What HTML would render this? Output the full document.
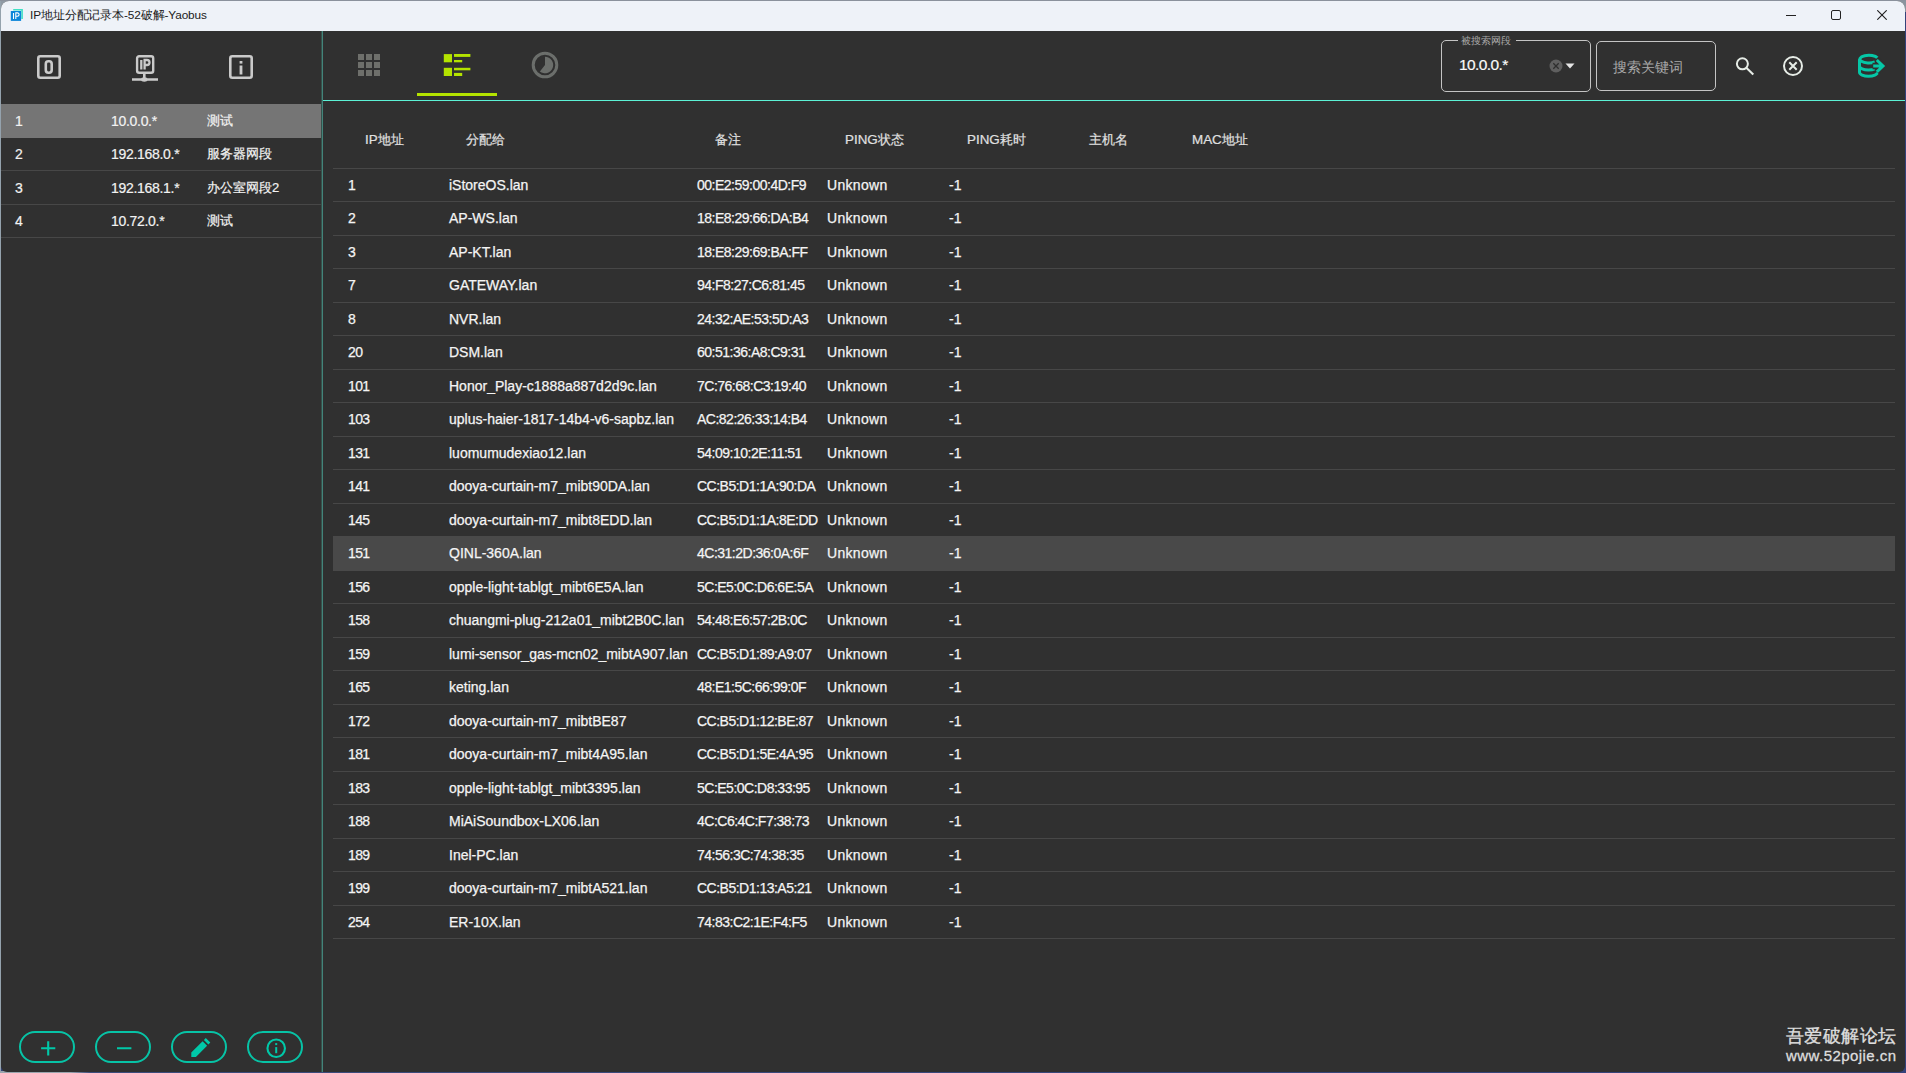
<!DOCTYPE html>
<html><head><meta charset="utf-8">
<style>
*{margin:0;padding:0;box-sizing:border-box}
html,body{width:1906px;height:1073px;overflow:hidden;background:#34427a;font-family:"Liberation Sans",sans-serif}
#win{position:absolute;left:1px;top:1px;width:1904px;height:1071px;border-radius:8px 8px 6px 6px;overflow:hidden;background:#303030}
.abs{position:absolute}
#title{position:absolute;left:0;top:0;width:1904px;height:30px;background:#eef2f8}
#title .t{position:absolute;left:29px;top:7px;font-size:11.8px;letter-spacing:-0.12px;color:#1a1a1a;white-space:nowrap}
#vline{position:absolute;left:320px;top:30px;width:1px;height:1041px;background:#36514b;box-shadow:1px 0 0 #43847a}
#hline{position:absolute;left:322px;top:99px;width:1582px;height:1px;background:#5cf2d6}
.srow{position:absolute;left:0;width:320px;height:34px;color:#f2f2f2;font-size:14px}
.srow span{position:absolute;top:9px;white-space:nowrap;-webkit-text-stroke:0.2px #f2f2f2}
.srow span.cj{font-size:13px;top:8px}
.sline{position:absolute;left:0;width:320px;height:1px;background:#474747}
.th{position:absolute;top:129.5px;font-size:13.4px;color:#e0e0e0;white-space:nowrap;-webkit-text-stroke:0.2px #e0e0e0}
.tline{position:absolute;left:332px;width:1562px;height:1px;background:#474747}
.hl{position:absolute;left:332px;width:1562px;background:#494949}
.td{position:absolute;font-size:14px;color:#f4f4f4;white-space:nowrap;-webkit-text-stroke:0.25px #f4f4f4}
.c1{left:347px;letter-spacing:-0.6px}.c2{left:448px;letter-spacing:0px}.c3{left:696px;letter-spacing:-0.5px}.c4{left:826px;letter-spacing:0.3px}.c5{left:948px}
.btn{position:absolute;top:1030px;width:56px;height:32px;border:2px solid #07c3a6;border-radius:16px}
.btn svg{position:absolute;left:0.6px;top:0.6px}

#dl{position:absolute;left:0;top:0;width:1px;height:1073px;background:#94a2ad}
#dt{position:absolute;left:0;top:0;width:1906px;height:1px;background:#8a919c}
#db{position:absolute;left:0;top:1071px;width:1906px;height:2px;background:linear-gradient(90deg,#9aa5ae 0,#9aa5ae 70px,#3c4c7c 90px,#34427a 100%)}
.srow span.ip{letter-spacing:-0.3px}
#dc{position:absolute;left:0;top:0;width:12px;height:12px;background:#8f9aa5}
#dc2{position:absolute;right:0;top:0;width:12px;height:12px;background:#8a949e}

</style></head><body>
<div id="dc"></div><div id="dc2"></div><div id="dl"></div><div id="dt"></div><div id="db"></div>
<div id="win">
<div id="title">
  <svg class="abs" style="left:9px;top:8px" width="14" height="14" viewBox="0 0 14 14">
    <path d="M3.2 0.8H12.1V10" fill="none" stroke="#3fe0c4" stroke-width="1.6"/>
    <rect x="0.8" y="2" width="10.3" height="9.9" fill="#0a86d9"/>
    <path d="M3.5 3.9v6.1M5.8 10V3.9h1.6a1.7 1.7 0 0 1 0 3.4H5.8" fill="none" stroke="#fff" stroke-width="1.1"/>
  </svg>
  <div class="t">IP地址分配记录本-52破解-Yaobus</div>
  <div class="abs" style="left:1785px;top:14px;width:10px;height:1px;background:#222"></div>
  <div class="abs" style="left:1830px;top:9px;width:10px;height:10px;border:1px solid #222;border-radius:2px"></div>
  <svg class="abs" style="left:1876px;top:9px" width="10" height="10" viewBox="0 0 10 10"><path d="M0.3 0.3L9.7 9.7M9.7 0.3L0.3 9.7" stroke="#1e1e1e" stroke-width="1.1"/></svg>
</div>

<!-- sidebar icons -->
<svg class="abs" style="left:35px;top:53px" width="28" height="28" viewBox="0 0 28 28">
  <rect x="2.3" y="2.3" width="21.4" height="21.4" rx="2" fill="none" stroke="#cacaca" stroke-width="2.6"/>
  <rect x="9.8" y="7.3" width="5.9" height="11.4" rx="2.6" fill="none" stroke="#cacaca" stroke-width="2.6"/>
</svg>
<svg class="abs" style="left:130px;top:53px" width="30" height="30" viewBox="0 0 30 30">
  <rect x="6.1" y="2.2" width="16.1" height="16.6" rx="2" fill="none" stroke="#cacaca" stroke-width="2.4"/>
  <path d="M10.3 6v9.5M13.6 15.5V6h2.4a2.5 2.5 0 0 1 0 5h-2.4" fill="none" stroke="#cacaca" stroke-width="2.3"/>
  <path d="M13.3 19v6M1 25.5h26" stroke="#cacaca" stroke-width="2.6"/>
  <ellipse cx="13.3" cy="25.5" rx="3.2" ry="2.2" fill="#cacaca"/>
</svg>
<svg class="abs" style="left:227px;top:53px" width="28" height="28" viewBox="0 0 28 28">
  <rect x="2.3" y="2.3" width="21.4" height="21.4" rx="2" fill="none" stroke="#cacaca" stroke-width="2.6"/>
  <path d="M13 11.5v9" stroke="#cacaca" stroke-width="2.8"/>
  <rect x="11.6" y="7" width="2.8" height="2.6" fill="#cacaca"/>
</svg>

<!-- sidebar rows -->
<div class="srow" style="top:103px;height:34px;background:#757575"><span style="left:14px">1</span><span class="ip" style="left:110px">10.0.0.*</span><span class="cj" style="left:206px">测试</span></div>
<div class="srow" style="top:136px"><span style="left:14px">2</span><span class="ip" style="left:110px">192.168.0.*</span><span class="cj" style="left:206px">服务器网段</span></div>
<div class="sline" style="top:169px"></div>
<div class="srow" style="top:170px"><span style="left:14px">3</span><span class="ip" style="left:110px">192.168.1.*</span><span class="cj" style="left:206px">办公室网段2</span></div>
<div class="sline" style="top:203px"></div>
<div class="srow" style="top:203px"><span style="left:14px">4</span><span class="ip" style="left:110px">10.72.0.*</span><span class="cj" style="left:206px">测试</span></div>
<div class="sline" style="top:236px"></div>

<div id="vline"></div>
<div id="hline"></div>

<!-- toolbar icons -->
<svg class="abs" style="left:357px;top:53px" width="22" height="22" viewBox="0 0 22 22" fill="#6e6f6b">
  <rect x="0" y="0" width="6" height="6"/><rect x="8" y="0" width="6" height="6"/><rect x="16" y="0" width="6" height="6"/>
  <rect x="0" y="8" width="6" height="6"/><rect x="8" y="8" width="6" height="6"/><rect x="16" y="8" width="6" height="6"/>
  <rect x="0" y="16" width="6" height="6"/><rect x="8" y="16" width="6" height="6"/><rect x="16" y="16" width="6" height="6"/>
</svg>
<svg class="abs" style="left:442px;top:53px" width="28" height="23" viewBox="0 0 28 23" fill="#b4e300">
  <rect x="0.8" y="0.1" width="8.2" height="8.2"/><rect x="11" y="0" width="16.4" height="2.9"/><rect x="11" y="6" width="8.2" height="2.3"/>
  <rect x="0.8" y="13.8" width="8.2" height="8.2"/><rect x="11" y="13.8" width="16.4" height="2.5"/><rect x="11" y="18.9" width="8.2" height="3.1"/>
</svg>
<div class="abs" style="left:416px;top:91.5px;width:80px;height:3px;background:#b4e300"></div>
<svg class="abs" style="left:529px;top:49px" width="30" height="30" viewBox="0 0 30 30">
  <circle cx="15" cy="15" r="11.8" fill="none" stroke="#6b6e6b" stroke-width="3"/>
  <path d="M15 6.8A8.2 8.2 0 1 1 9.86 21.39L15 15Z" fill="#6b6e6b"/>
</svg>

<!-- search combo -->
<div class="abs" style="left:1440px;top:39px;width:150px;height:52px;border:1.5px solid #c4c4c4;border-radius:5px"></div>
<div class="abs" style="left:1457px;top:34px;width:58px;height:8px;background:#303030"></div>
<div class="abs" style="left:1460px;top:32.5px;font-size:10.2px;color:#a8a8a8;white-space:nowrap">被搜索网段</div>
<div class="abs" style="left:1458px;top:55px;font-size:15.5px;letter-spacing:-0.6px;color:#fafafa;white-space:nowrap;-webkit-text-stroke:0.2px #fafafa">10.0.0.*</div>
<svg class="abs" style="left:1548px;top:58px" width="14" height="14" viewBox="0 0 14 14">
  <circle cx="7" cy="7" r="6.5" fill="#5f5f5f"/>
  <path d="M4.3 4.3L9.7 9.7M9.7 4.3L4.3 9.7" stroke="#2e2e2e" stroke-width="1.3"/>
</svg>
<svg class="abs" style="left:1564px;top:62px" width="10" height="6" viewBox="0 0 10 6"><path d="M0.5 0.5H9.5L5 5.5Z" fill="#e6e6e6"/></svg>

<div class="abs" style="left:1595px;top:40px;width:120px;height:50px;border:1.5px solid #c4c4c4;border-radius:5px"></div>
<div class="abs" style="left:1612px;top:58px;font-size:14px;color:#a8a8a8;white-space:nowrap">搜索关键词</div>

<svg class="abs" style="left:1733px;top:55px" width="22" height="22" viewBox="0 0 22 22">
  <circle cx="8.4" cy="7.8" r="5.5" fill="none" stroke="#e6ece6" stroke-width="2"/>
  <path d="M12.3 11.7L19.3 18.5" stroke="#e6ece6" stroke-width="2.1"/>
</svg>
<svg class="abs" style="left:1780px;top:53px" width="24" height="24" viewBox="0 0 24 24">
  <circle cx="12" cy="12" r="9" fill="none" stroke="#e6ece6" stroke-width="2"/>
  <path d="M8.3 8.3L15.7 15.7M15.7 8.3L8.3 15.7" stroke="#e6ece6" stroke-width="2"/>
</svg>
<svg class="abs" style="left:1849px;top:47px" width="40" height="36" viewBox="0 0 40 36">
  <g fill="none" stroke="#05c7a6" stroke-width="3">
  <path d="M27.3 9.8A9 3.85 0 1 0 24.8 14"/>
  <path d="M9.5 11.25V24.3M9.5 18a9 4 0 0 0 18 0M9.5 24.3a9 4 0 0 0 18 0"/>
  </g>
  <path d="M22.5 18H33M26.8 12l6.2 6-6.2 5.8" fill="none" stroke="#303030" stroke-width="6.5"/>
  <path d="M23.2 18H33M26.8 12l6.2 6-6.2 5.8" fill="none" stroke="#05c7a6" stroke-width="3"/>
</svg>

<!-- table header -->
<div class="th" style="left:364px">IP地址</div>
<div class="th" style="left:465px">分配给</div>
<div class="th" style="left:714px">备注</div>
<div class="th" style="left:844px">PING状态</div>
<div class="th" style="left:966px">PING耗时</div>
<div class="th" style="left:1088px">主机名</div>
<div class="th" style="left:1191px">MAC地址</div>

<!-- bottom buttons -->
<div class="btn" style="left:18px"><svg width="53" height="29" viewBox="0 0 53 29"><path d="M26.2 7.2v14.2M19.1 14.3h14.2" stroke="#00c8a8" stroke-width="2.1"/></svg></div>
<div class="btn" style="left:94px"><svg width="53" height="29" viewBox="0 0 53 29"><path d="M19 14.3h14.4" stroke="#00c8a8" stroke-width="2.1"/></svg></div>
<div class="btn" style="left:170px"><svg width="53" height="29" viewBox="0 0 53 29"><path d="M17.3 23V18.5L28.6 7.2L33.1 11.7L21.9 23Z M29.9 6L31.8 4.1L36.3 8.6L34.4 10.5Z" fill="#00c8a8"/></svg></div>
<div class="btn" style="left:246px"><svg width="53" height="29" viewBox="0 0 53 29"><circle cx="26.2" cy="14.3" r="8.75" fill="none" stroke="#00c8a8" stroke-width="2.1"/><path d="M26.2 13.1v6.1" stroke="#00c8a8" stroke-width="2"/><rect x="25.2" y="9.1" width="2" height="2" fill="#00c8a8"/></svg></div>

<!-- watermark -->
<div class="abs" style="left:1785px;top:1022px;font-size:18.4px;letter-spacing:0.4px;color:#dedede;white-space:nowrap;-webkit-text-stroke:0.35px #dedede">吾爱破解论坛</div>
<div class="abs" style="left:1785px;top:1046px;font-size:15px;letter-spacing:0.45px;color:#dedede;white-space:nowrap;-webkit-text-stroke:0.3px #dedede">www.52pojie.cn</div>

<div class="tline" style="top:167px"></div><div class="tline" style="top:200px"></div><div class="tline" style="top:234px"></div><div class="tline" style="top:267px"></div><div class="tline" style="top:301px"></div><div class="tline" style="top:334px"></div><div class="tline" style="top:368px"></div><div class="tline" style="top:401px"></div><div class="tline" style="top:435px"></div><div class="tline" style="top:468px"></div><div class="tline" style="top:502px"></div><div class="tline" style="top:602px"></div><div class="tline" style="top:636px"></div><div class="tline" style="top:669px"></div><div class="tline" style="top:703px"></div><div class="tline" style="top:736px"></div><div class="tline" style="top:770px"></div><div class="tline" style="top:803px"></div><div class="tline" style="top:837px"></div><div class="tline" style="top:870px"></div><div class="tline" style="top:904px"></div><div class="tline" style="top:937px"></div>
<div class="td c1" style="top:176px">1</div><div class="td c2" style="top:176px">iStoreOS.lan</div><div class="td c3" style="top:176px">00:E2:59:00:4D:F9</div><div class="td c4" style="top:176px">Unknown</div><div class="td c5" style="top:176px">-1</div><div class="td c1" style="top:209px">2</div><div class="td c2" style="top:209px">AP-WS.lan</div><div class="td c3" style="top:209px">18:E8:29:66:DA:B4</div><div class="td c4" style="top:209px">Unknown</div><div class="td c5" style="top:209px">-1</div><div class="td c1" style="top:243px">3</div><div class="td c2" style="top:243px">AP-KT.lan</div><div class="td c3" style="top:243px">18:E8:29:69:BA:FF</div><div class="td c4" style="top:243px">Unknown</div><div class="td c5" style="top:243px">-1</div><div class="td c1" style="top:276px">7</div><div class="td c2" style="top:276px">GATEWAY.lan</div><div class="td c3" style="top:276px">94:F8:27:C6:81:45</div><div class="td c4" style="top:276px">Unknown</div><div class="td c5" style="top:276px">-1</div><div class="td c1" style="top:310px">8</div><div class="td c2" style="top:310px">NVR.lan</div><div class="td c3" style="top:310px">24:32:AE:53:5D:A3</div><div class="td c4" style="top:310px">Unknown</div><div class="td c5" style="top:310px">-1</div><div class="td c1" style="top:343px">20</div><div class="td c2" style="top:343px">DSM.lan</div><div class="td c3" style="top:343px">60:51:36:A8:C9:31</div><div class="td c4" style="top:343px">Unknown</div><div class="td c5" style="top:343px">-1</div><div class="td c1" style="top:377px">101</div><div class="td c2" style="top:377px">Honor_Play-c1888a887d2d9c.lan</div><div class="td c3" style="top:377px">7C:76:68:C3:19:40</div><div class="td c4" style="top:377px">Unknown</div><div class="td c5" style="top:377px">-1</div><div class="td c1" style="top:410px">103</div><div class="td c2" style="top:410px">uplus-haier-1817-14b4-v6-sapbz.lan</div><div class="td c3" style="top:410px">AC:82:26:33:14:B4</div><div class="td c4" style="top:410px">Unknown</div><div class="td c5" style="top:410px">-1</div><div class="td c1" style="top:444px">131</div><div class="td c2" style="top:444px">luomumudexiao12.lan</div><div class="td c3" style="top:444px">54:09:10:2E:11:51</div><div class="td c4" style="top:444px">Unknown</div><div class="td c5" style="top:444px">-1</div><div class="td c1" style="top:477px">141</div><div class="td c2" style="top:477px">dooya-curtain-m7_mibt90DA.lan</div><div class="td c3" style="top:477px">CC:B5:D1:1A:90:DA</div><div class="td c4" style="top:477px">Unknown</div><div class="td c5" style="top:477px">-1</div><div class="td c1" style="top:511px">145</div><div class="td c2" style="top:511px">dooya-curtain-m7_mibt8EDD.lan</div><div class="td c3" style="top:511px">CC:B5:D1:1A:8E:DD</div><div class="td c4" style="top:511px">Unknown</div><div class="td c5" style="top:511px">-1</div><div class="hl" style="top:535px;height:35px"></div><div class="td c1" style="top:544px">151</div><div class="td c2" style="top:544px">QINL-360A.lan</div><div class="td c3" style="top:544px">4C:31:2D:36:0A:6F</div><div class="td c4" style="top:544px">Unknown</div><div class="td c5" style="top:544px">-1</div><div class="td c1" style="top:578px">156</div><div class="td c2" style="top:578px">opple-light-tablgt_mibt6E5A.lan</div><div class="td c3" style="top:578px">5C:E5:0C:D6:6E:5A</div><div class="td c4" style="top:578px">Unknown</div><div class="td c5" style="top:578px">-1</div><div class="td c1" style="top:611px">158</div><div class="td c2" style="top:611px">chuangmi-plug-212a01_mibt2B0C.lan</div><div class="td c3" style="top:611px">54:48:E6:57:2B:0C</div><div class="td c4" style="top:611px">Unknown</div><div class="td c5" style="top:611px">-1</div><div class="td c1" style="top:645px">159</div><div class="td c2" style="top:645px">lumi-sensor_gas-mcn02_mibtA907.lan</div><div class="td c3" style="top:645px">CC:B5:D1:89:A9:07</div><div class="td c4" style="top:645px">Unknown</div><div class="td c5" style="top:645px">-1</div><div class="td c1" style="top:678px">165</div><div class="td c2" style="top:678px">keting.lan</div><div class="td c3" style="top:678px">48:E1:5C:66:99:0F</div><div class="td c4" style="top:678px">Unknown</div><div class="td c5" style="top:678px">-1</div><div class="td c1" style="top:712px">172</div><div class="td c2" style="top:712px">dooya-curtain-m7_mibtBE87</div><div class="td c3" style="top:712px">CC:B5:D1:12:BE:87</div><div class="td c4" style="top:712px">Unknown</div><div class="td c5" style="top:712px">-1</div><div class="td c1" style="top:745px">181</div><div class="td c2" style="top:745px">dooya-curtain-m7_mibt4A95.lan</div><div class="td c3" style="top:745px">CC:B5:D1:5E:4A:95</div><div class="td c4" style="top:745px">Unknown</div><div class="td c5" style="top:745px">-1</div><div class="td c1" style="top:779px">183</div><div class="td c2" style="top:779px">opple-light-tablgt_mibt3395.lan</div><div class="td c3" style="top:779px">5C:E5:0C:D8:33:95</div><div class="td c4" style="top:779px">Unknown</div><div class="td c5" style="top:779px">-1</div><div class="td c1" style="top:812px">188</div><div class="td c2" style="top:812px">MiAiSoundbox-LX06.lan</div><div class="td c3" style="top:812px">4C:C6:4C:F7:38:73</div><div class="td c4" style="top:812px">Unknown</div><div class="td c5" style="top:812px">-1</div><div class="td c1" style="top:846px">189</div><div class="td c2" style="top:846px">Inel-PC.lan</div><div class="td c3" style="top:846px">74:56:3C:74:38:35</div><div class="td c4" style="top:846px">Unknown</div><div class="td c5" style="top:846px">-1</div><div class="td c1" style="top:879px">199</div><div class="td c2" style="top:879px">dooya-curtain-m7_mibtA521.lan</div><div class="td c3" style="top:879px">CC:B5:D1:13:A5:21</div><div class="td c4" style="top:879px">Unknown</div><div class="td c5" style="top:879px">-1</div><div class="td c1" style="top:913px">254</div><div class="td c2" style="top:913px">ER-10X.lan</div><div class="td c3" style="top:913px">74:83:C2:1E:F4:F5</div><div class="td c4" style="top:913px">Unknown</div><div class="td c5" style="top:913px">-1</div>
</div>
</body></html>
